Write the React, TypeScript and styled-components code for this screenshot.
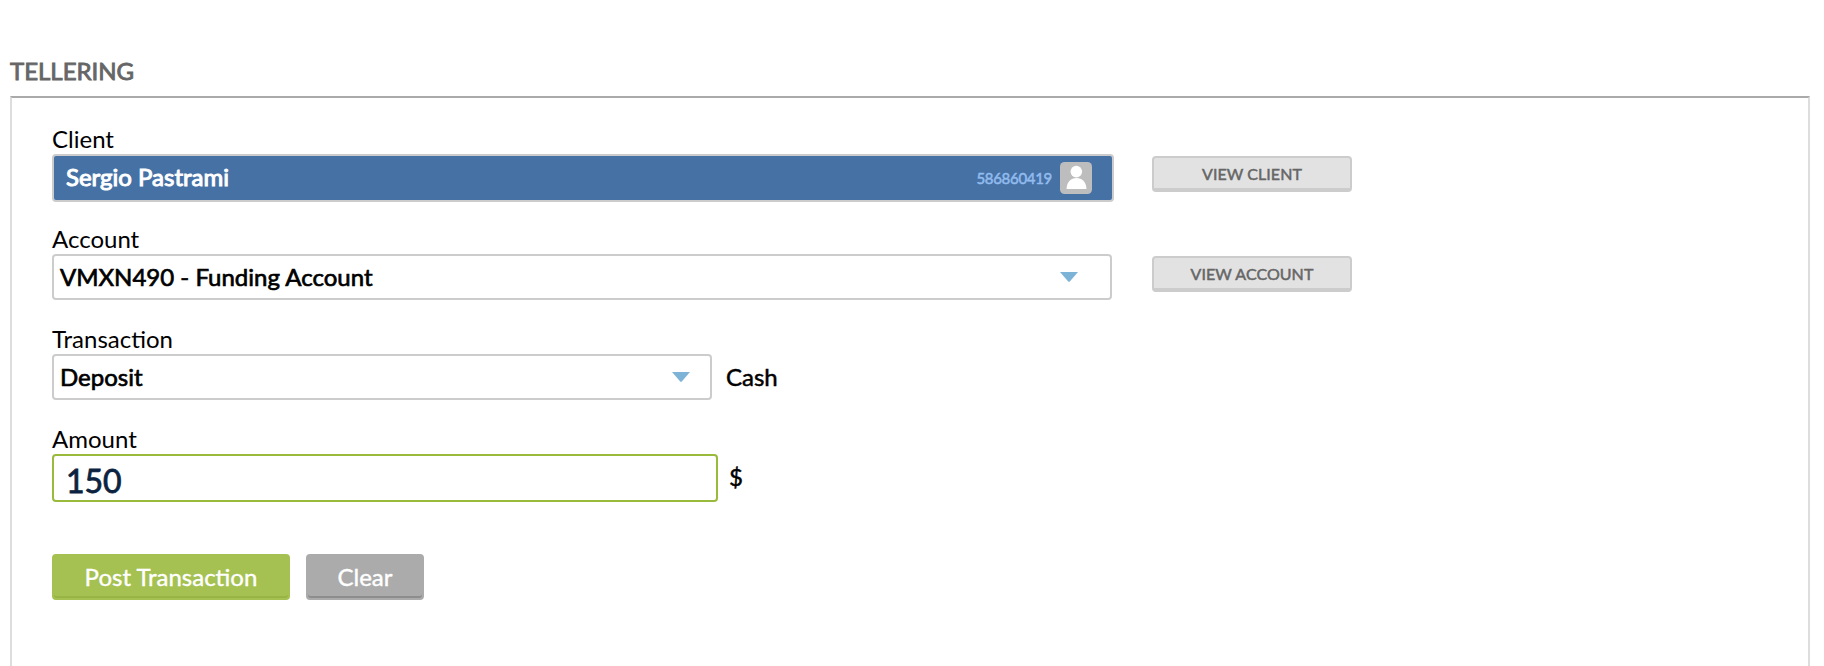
import React from "react";
import styled, { createGlobalStyle } from "styled-components";

const GlobalStyle = createGlobalStyle`
  *, *::before, *::after { box-sizing: border-box; }
  html, body { margin: 0; height: 100%; overflow: hidden; background: #fff; }
  #root { height: 100%; }
  body, button, input { font-family: Lato, "Open Sans", sans-serif; }
  body { font-size: 24px; color: #000; }
`;

const Page = styled.main`
  display: flex;
  flex-direction: column;
  height: 100%;
  padding: 53px 14px 0 10px;
`;

const Title = styled.h1`
  margin: 0 0 7px;
  height: 36px;
  font-size: 24px;
  font-weight: 400;
  line-height: 36px;
  color: #666;
  -webkit-text-stroke: 0.9px #666;
`;

const Panel = styled.section`
  flex: 1;
  padding: 26px 0 0 40px;
  border: solid #ddd;
  border-width: 2px 2px 0;
  border-top-color: #aaa;
`;

const Field = styled.div`
  height: 100px;
`;

const Label = styled.label`
  display: block;
  height: 30px;
  line-height: 30px;
`;

const Row = styled.div`
  display: flex;
  align-items: flex-start;
`;

const ClientBox = styled.div`
  display: flex;
  align-items: center;
  width: 1062px;
  height: 48px;
  padding: 0 20px 0 12px;
  border: 2px solid #ccc;
  border-radius: 4px;
  background: #4671a5;
`;

const ClientName = styled.span`
  flex: 1;
  padding-bottom: 2px;
  line-height: 42px;
  color: #fff;
  -webkit-text-stroke: 1px #fff;
`;

const ClientNumber = styled.span`
  margin-right: 8px;
  font-size: 15px;
  letter-spacing: -0.3px;
  color: #92bcee;
  -webkit-text-stroke: 0.5px #92bcee;
`;

const Select = styled.div<{ $width: number; $inset: number }>`
  display: flex;
  align-items: center;
  justify-content: space-between;
  width: ${(p) => p.$width}px;
  height: 46px;
  padding: 0 ${(p) => p.$inset}px 0 6px;
  border: 2px solid #ccc;
  border-radius: 4px;
  line-height: 42px;
  -webkit-text-stroke: 0.7px #000;
`;

const Suffix = styled.span<{ $gap: number }>`
  margin-left: ${(p) => p.$gap}px;
  line-height: 46px;
  -webkit-text-stroke: 0.5px #000;
`;

const AmountInput = styled.input`
  width: 666px;
  height: 48px;
  padding: 4px 12px 0;
  border: 2px solid #9aba3c;
  border-radius: 4px;
  outline: none;
  background: #fff;
  font-size: 32px;
  color: #0b2340;
  -webkit-text-stroke: 0.8px #0b2340;
`;

const ViewButton = styled.button<{ $gap: number }>`
  width: 200px;
  height: 36px;
  margin: 2px 0 0 ${(p) => p.$gap}px;
  padding: 2px 0 0;
  border: 2px solid #ccc;
  border-bottom-width: 4px;
  border-radius: 4px;
  background: #e2e2e2;
  font-size: 16px;
  line-height: 28px;
  letter-spacing: 0.05px;
  color: #666;
  -webkit-text-stroke: 0.5px #666;
`;

const Actions = styled.div`
  display: flex;
  gap: 16px;
  padding-top: 30px;
`;

const ActionButton = styled.button<{ $width: number; $face: string; $edge: string }>`
  width: ${(p) => p.$width}px;
  height: 46px;
  padding: 0;
  border: 2px solid ${(p) => p.$face};
  border-radius: 4px;
  background: ${(p) => p.$face};
  box-shadow: inset 0 -2px 0 ${(p) => p.$edge};
  font-size: 24px;
  line-height: 42px;
  color: #fff;
  -webkit-text-stroke: 0.4px #fff;
`;

const Arrow = () => (
  <svg width="18" height="10" viewBox="0 0 18 10" aria-hidden="true">
    <path d="M0 0H18L9.8 9.4Q9 10.2 8.2 9.4Z" fill="#7eb3d8" />
  </svg>
);

const Avatar = () => (
  <svg width="32" height="32" viewBox="0 0 32 32" aria-hidden="true">
    <rect width="32" height="32" rx="4.5" fill="#bdbdbd" />
    <circle cx="16.3" cy="9.6" r="5.8" fill="#fff" />
    <path d="M6.5 27C7 19.5 11 16 16.5 16S26 19.5 26.5 27Z" fill="#fff" />
  </svg>
);

export default function App() {
  return (
    <>
      <GlobalStyle />
      <Page>
        <Title>TELLERING</Title>
        <Panel>
          <Field>
            <Label>Client</Label>
            <Row>
              <ClientBox>
                <ClientName>Sergio Pastrami</ClientName>
                <ClientNumber>586860419</ClientNumber>
                <Avatar />
              </ClientBox>
              <ViewButton $gap={38}>VIEW CLIENT</ViewButton>
            </Row>
          </Field>
          <Field>
            <Label>Account</Label>
            <Row>
              <Select $width={1060} $inset={32}>
                VMXN490 - Funding Account
                <Arrow />
              </Select>
              <ViewButton $gap={40}>VIEW ACCOUNT</ViewButton>
            </Row>
          </Field>
          <Field>
            <Label>Transaction</Label>
            <Row>
              <Select $width={660} $inset={20}>
                Deposit
                <Arrow />
              </Select>
              <Suffix $gap={14}>Cash</Suffix>
            </Row>
          </Field>
          <Field>
            <Label htmlFor="amount">Amount</Label>
            <Row>
              <AmountInput id="amount" defaultValue="150" />
              <Suffix $gap={11}>$</Suffix>
            </Row>
          </Field>
          <Actions>
            <ActionButton $width={238} $face="#a5c151" $edge="#98b445">
              Post Transaction
            </ActionButton>
            <ActionButton $width={118} $face="#ababab" $edge="#8d8d8d">
              Clear
            </ActionButton>
          </Actions>
        </Panel>
      </Page>
    </>
  );
}
